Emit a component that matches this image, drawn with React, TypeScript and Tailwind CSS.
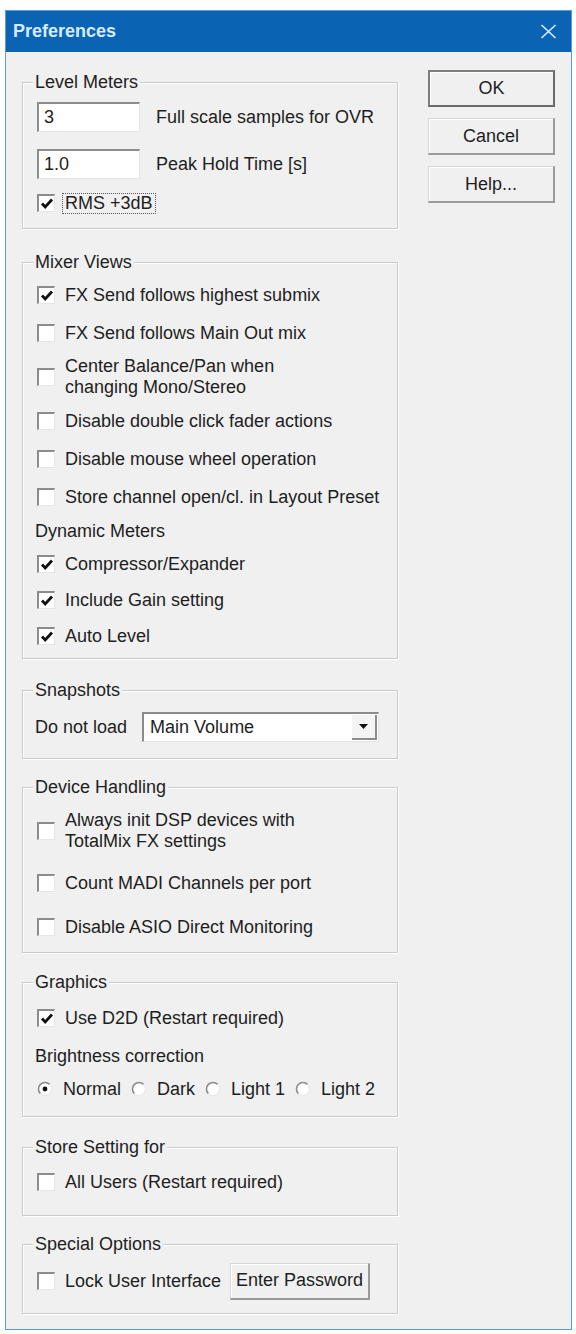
import type { ReactNode } from "react";

const cn = (...parts: (string | false | undefined)[]) => parts.filter(Boolean).join(" ");

const Check = () => (
    <svg width="14" height="14" viewBox="0 0 14 14" className="block">
        <path d="M2 6.5 L5.2 10 L12 2.5" fill="none" stroke="#111" strokeWidth="2.8" />
    </svg>
);

const CheckBox = ({ checked }: { checked?: boolean }) => (
    <span className="flex h-[18px] w-[18px] shrink-0 items-center justify-center border-t-2 border-l-2 border-r border-b border-t-[#8c8c8c] border-l-[#8c8c8c] border-r-[#e6e6e6] border-b-[#e6e6e6] bg-white">
        {checked && <Check />}
    </span>
);

const Radio = ({ checked }: { checked?: boolean }) => (
    <svg width="16" height="16" viewBox="0 0 16 16" className="shrink-0">
        <circle cx="8" cy="8" r="6.5" fill="#fff" />
        <path d="M3.4 12.6 A6.5 6.5 0 0 1 12.6 3.4" fill="none" stroke="#8c8c8c" strokeWidth="1.6" />
        <path d="M12.6 3.4 A6.5 6.5 0 0 1 3.4 12.6" fill="none" stroke="#e8e8e8" strokeWidth="1.2" />
        {checked && <circle cx="8" cy="8" r="2.4" fill="#111" />}
    </svg>
);

interface IRowProps {
    checked?: boolean;
    h: string;
    children: ReactNode;
}

const CheckRow = ({ checked, h, children }: IRowProps) => (
    <div className={cn("flex items-center gap-[10px]", h)}>
        <CheckBox checked={checked} />
        <span className="whitespace-nowrap leading-[21px]">{children}</span>
    </div>
);

interface IGroupProps {
    label: string;
    className?: string;
    children: ReactNode;
}

const Group = ({ label, className, children }: IGroupProps) => (
    <div
        className={cn(
            "relative border border-[#cbcbcb] pl-[14px] shadow-[inset_1px_1px_0_#ffffff,1px_1px_0_#ffffff]",
            className
        )}
    >
        <span className="absolute left-[10px] top-[-12px] bg-[#f0f0f0] px-[2px] leading-[22px]">
            {label}
        </span>
        {children}
    </div>
);

const TextBox = ({ value }: { value: string }) => (
    <div className="flex h-[30px] w-[103px] items-center border-t-2 border-l-2 border-r border-b border-t-[#8c8c8c] border-l-[#8c8c8c] border-r-[#e6e6e6] border-b-[#e6e6e6] bg-white pl-[5px]">
        {value}
    </div>
);

const Button = ({ children, primary, className }: { children: ReactNode; primary?: boolean; className?: string }) => (
    <div
        className={cn(
            "flex h-[37px] items-center justify-center whitespace-nowrap bg-[#f0f0f0]",
            primary
                ? "border-2 border-[#7d7d7d] border-r-[#6a6a6a] border-b-[#6a6a6a] shadow-[inset_1px_1px_0_#ffffff]"
                : "border border-[#d6d6d6] border-r-2 border-b-2 border-r-[#9a9a9a] border-b-[#9a9a9a] shadow-[inset_1px_1px_0_#ffffff]",
            className
        )}
    >
        {children}
    </div>
);

const radios = [
    { label: "Normal", checked: true },
    { label: "Dark" },
    { label: "Light 1" },
    { label: "Light 2" },
];

export default function App() {
    return (
        <div className="min-h-[1334px] bg-white pt-[10px] pl-[5px] font-['Liberation_Sans',Arial,sans-serif] text-[18px] text-[#1e1e1e]">
            <div className="w-[567px] border border-[#5b9bd5] bg-[#f0f0f0]">
                {/* Title bar */}
                <div className="flex h-[41px] items-center justify-between bg-[#0b63b3] pl-[7px] pr-[14px]">
                    <span className="text-[18px] font-bold text-[#d6ecff]">Preferences</span>
                    <svg width="17" height="15" viewBox="0 0 17 15">
                        <path d="M1.5 1 L15.5 14 M15.5 1 L1.5 14" stroke="#d6ecff" strokeWidth="1.7" />
                    </svg>
                </div>

                <div className="flex pl-[16px] pr-[16px] pb-[15px]">
                    {/* Left column */}
                    <div className="flex w-[376px] flex-col pt-[30px]">
                        <Group label="Level Meters" className="h-[147px] pt-[19px]">
                            <div className="flex h-[30px] items-center">
                                <TextBox value="3" />
                                <span className="ml-[16px]">Full scale samples for OVR</span>
                            </div>
                            <div className="mt-[17px] flex h-[30px] items-center">
                                <TextBox value="1.0" />
                                <span className="ml-[16px]">Peak Hold Time [s]</span>
                            </div>
                            <div className="mt-[13px] flex h-[22px] items-center gap-[8px]">
                                <CheckBox checked />
                                <span className="px-[2px] leading-[19px] outline-1 outline-dotted outline-[#555]">
                                    RMS +3dB
                                </span>
                            </div>
                        </Group>

                        <Group label="Mixer Views" className="mt-[33px] h-[397px] pt-[13px]">
                            <CheckRow checked h="h-[38px]">FX Send follows highest submix</CheckRow>
                            <CheckRow h="h-[38px]">FX Send follows Main Out mix</CheckRow>
                            <CheckRow h="h-[50px]">
                                Center Balance/Pan when
                                <br />
                                changing Mono/Stereo
                            </CheckRow>
                            <CheckRow h="h-[38px]">Disable double click fader actions</CheckRow>
                            <CheckRow h="h-[38px]">Disable mouse wheel operation</CheckRow>
                            <CheckRow h="h-[38px]">Store channel open/cl. in Layout Preset</CheckRow>
                            <div className="-ml-[2px] flex h-[30px] items-center">Dynamic Meters</div>
                            <CheckRow checked h="h-[36px]">Compressor/Expander</CheckRow>
                            <CheckRow checked h="h-[36px]">Include Gain setting</CheckRow>
                            <CheckRow checked h="h-[36px]">Auto Level</CheckRow>
                        </Group>

                        <Group label="Snapshots" className="mt-[31px] h-[69px] pt-[21px]">
                            <div className="-ml-[2px] flex h-[30px] items-center">
                                <span>Do not load</span>
                                <div className="ml-[15px] flex h-[30px] w-[237px] items-stretch border-t-2 border-l-2 border-r border-b border-t-[#8c8c8c] border-l-[#8c8c8c] border-r-[#e6e6e6] border-b-[#e6e6e6] bg-white">
                                    <span className="flex flex-1 items-center pl-[6px]">Main Volume</span>
                                    <span className="m-[1px] flex w-[25px] items-center justify-center border-r-2 border-b-2 border-r-[#8c8c8c] border-b-[#8c8c8c] bg-[#f4f4f4]">
                                        <svg width="9" height="5" viewBox="0 0 9 5">
                                            <path d="M0 0 H9 L4.5 5 Z" fill="#111" />
                                        </svg>
                                    </span>
                                </div>
                            </div>
                        </Group>

                        <Group label="Device Handling" className="mt-[28px] h-[166px] pt-[18px]">
                            <CheckRow h="h-[50px]">
                                Always init DSP devices with
                                <br />
                                TotalMix FX settings
                            </CheckRow>
                            <CheckRow h="h-[54px]">Count MADI Channels per port</CheckRow>
                            <CheckRow h="h-[34px]">Disable ASIO Direct Monitoring</CheckRow>
                        </Group>

                        <Group label="Graphics" className="mt-[29px] h-[135px] pt-[17px]">
                            <CheckRow checked h="h-[36px]">Use D2D (Restart required)</CheckRow>
                            <div className="-ml-[2px] flex h-[40px] items-center">Brightness correction</div>
                            <div className="flex h-[26px] items-center gap-[10px] whitespace-nowrap">
                                {radios.map((r) => (
                                    <div key={r.label} className="flex items-center gap-[10px]">
                                        <Radio checked={r.checked} />
                                        <span>{r.label}</span>
                                    </div>
                                ))}
                            </div>
                        </Group>

                        <Group label="Store Setting for" className="mt-[30px] h-[69px] pt-[19px]">
                            <CheckRow h="h-[30px]">All Users (Restart required)</CheckRow>
                        </Group>

                        <Group label="Special Options" className="mt-[28px] h-[70px] pt-[18px]">
                            <div className="flex h-[36px] items-center whitespace-nowrap">
                                <CheckBox />
                                <span className="ml-[10px]">Lock User Interface</span>
                                <Button className="ml-[9px] h-[36px] w-[140px]">Enter Password</Button>
                            </div>
                        </Group>
                    </div>

                    {/* Buttons */}
                    <div className="ml-[30px] flex w-[127px] flex-col gap-[11px] pt-[18px]">
                        <Button primary>OK</Button>
                        <Button>Cancel</Button>
                        <Button>Help...</Button>
                    </div>
                </div>
            </div>
        </div>
    );
}
